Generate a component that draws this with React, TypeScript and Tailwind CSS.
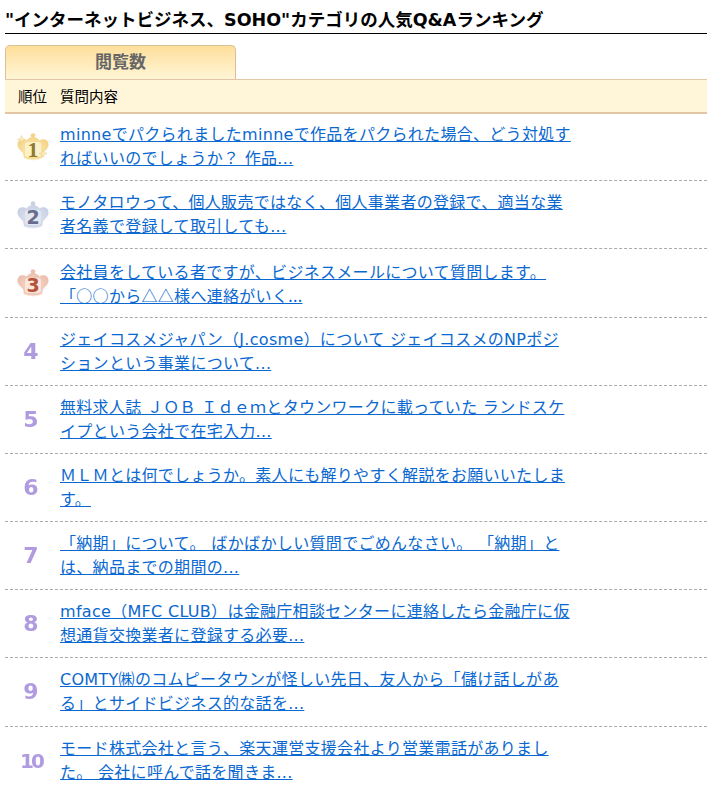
const items = [
  "minneでパクられましたminneで作品をパクられた場合、どう対処すればいいのでしょうか？ 作品...",
  "モノタロウって、個人販売ではなく、個人事業者の登録で、適当な業者名義で登録して取引しても...",
  "会社員をしている者ですが、ビジネスメールについて質問します。 「○○から△△様へ連絡がいく...",
  "ジェイコスメジャパン（J.cosme）について ジェイコスメのNPポジションという事業について...",
  "無料求人誌 ＪＯＢ Ｉｄｅｍとタウンワークに載っていた ランドスケイプという会社で在宅入力...",
  "ＭＬＭとは何でしょうか。素人にも解りやすく解説をお願いいたします。",
  "「納期」について。 ばかばかしい質問でごめんなさい。 「納期」とは、納品までの期間の...",
  "mface（MFC CLUB）は金融庁相談センターに連絡したら金融庁に仮想通貨交換業者に登録する必要...",
  "COMTY㈱のコムピータウンが怪しい先日、友人から「儲け話しがある」とサイドビジネス的な話を...",
  "モード株式会社と言う、楽天運営支援会社より営業電話がありました。 会社に呼んで話を聞きま...",
]

type CrownProps = { rank: number; edge: string; center: string; plate: string; dark: string }

function Crown({ rank, edge, center, plate, dark }: CrownProps) {
  const gradient = `crown-${rank}`
  return (
    <svg width="32" height="28" viewBox="0 0 32 28" className="ml-[4px] block">
      <defs>
        <radialGradient id={gradient} cx="50%" cy="55%" r="55%">
          <stop offset="0%" stopColor={center} />
          <stop offset="100%" stopColor={edge} />
        </radialGradient>
      </defs>
      <circle cx="16" cy="2.500" r="2.300" fill={edge} />
      <path
        d="M16 4C19 4 21.500 6 22.500 7.500C25 5.500 31 5.500 31.500 11C32 15 28 18 26 20L25 25C20 27.500 12 27.500 7 25L6 20C4 18 0 15 0.500 11C1 5.500 7 5.500 9.500 7.500C10.500 6 13 4 16 4Z"
        fill={`url(#${gradient})`}
      />
      <path d="M7 24.500C12 27 20 27 25 24.500L25 25.500C20 28 12 28 7 25.500Z" fill={plate} />
      <rect x="8" y="9" width="16" height="15" rx="2.500" fill={plate} opacity="0.8" />
      {rank === 1 ? (
        <>
          <text x="16" y="23.500" textAnchor="middle" fontSize="22" fontWeight="700" fontFamily="'Liberation Serif', serif" fill={dark}>1</text>
          <path d="M4.500 2.500L5.500 5.500L8.500 6.500L5.500 7.500L4.500 10.500L3.500 7.500L0.500 6.500L3.500 5.500Z" fill="#fbeec4" stroke="#e8c879" strokeWidth="0.5" />
          <path d="M26 16.500L27 19.500L30 20.500L27 21.500L26 24.500L25 21.500L22 20.500L25 19.500Z" fill="#fbeec4" stroke="#e8c879" strokeWidth="0.5" />
        </>
      ) : (
        <text x="16" y="23" textAnchor="middle" fontSize="19" fontWeight="700" fontFamily="'DejaVu Sans', sans-serif" fill={dark}>{rank}</text>
      )}
    </svg>
  )
}

function Rank({ rank }: { rank: number }) {
  if (rank === 1) return <Crown rank={1} edge="#f4d488" center="#fdeebb" plate="#fdf4d2" dark="#8f7a2b" />
  if (rank === 2) return <Crown rank={2} edge="#c9d1e5" center="#e2e6f2" plate="#e6e9f3" dark="#666e8c" />
  if (rank === 3) return <Crown rank={3} edge="#edbfae" center="#f8dcd0" plate="#fbebe4" dark="#b5533a" />
  return (
    <span className={"block font-bold text-[#b09ae0] blur-[0.3px] font-['DejaVu_Sans',sans-serif] " + (rank === 10 ? "text-[20px] tracking-[-3px]" : "text-[22px]")}>
      {rank}
    </span>
  )
}

export default function App() {
  return (
    <div className="w-[707px] bg-white font-['DejaVu_Sans','Noto_Sans_CJK_JP',sans-serif] text-black">
      <div className="pl-[5px] pt-[10px]">
        <h2 className="border-b border-black pb-[2px] text-[17.500px] font-bold leading-[21px]">
          "インターネットビジネス、SOHO"カテゴリの人気Q&Aランキング
        </h2>
      </div>
      <div className="pl-[5px] pt-[11px]">
        <div className="flex h-[35px] w-[231px] items-center justify-center rounded-t-[5px] border border-b-0 border-[#dcbf94] bg-gradient-to-b from-[#fedf9b] to-[#fff6d7] text-[17px] font-bold text-[#666666]">
          閲覧数
        </div>
        <div className="-mt-px flex h-[35px] items-center border-b-2 border-t border-b-[#e3c6a6] border-t-[#e3c6a6] bg-[#fff6da] pl-[13px] pt-[4px] text-[14.500px]">
          <span className="w-[42px]">順位</span>
          <span>質問内容</span>
        </div>
        <ul className="-mt-px">
          {items.map((text, i) => (
            <li key={i} className={"flex h-[68.18px] items-center " + (i < 9 ? "border-b border-dashed border-[#aaaaaa]" : "")}>
              <div className="flex w-[52px] shrink-0 items-center justify-center">
                <Rank rank={i + 1} />
              </div>
              {/* row 3 has no latin, and its ○△ only come out full width in the CJK font */}
              <a
                href="#"
                className={
                  "ml-[3px] mt-[1px] w-[512px] text-[16px] leading-[24px] tracking-[0.3px] text-[#0a68d0] underline [text-decoration-skip-ink:none] " +
                  (i === 2 ? "font-['Noto_Sans_CJK_JP',sans-serif]" : "")
                }
              >
                {text}
              </a>
            </li>
          ))}
        </ul>
      </div>
    </div>
  )
}
